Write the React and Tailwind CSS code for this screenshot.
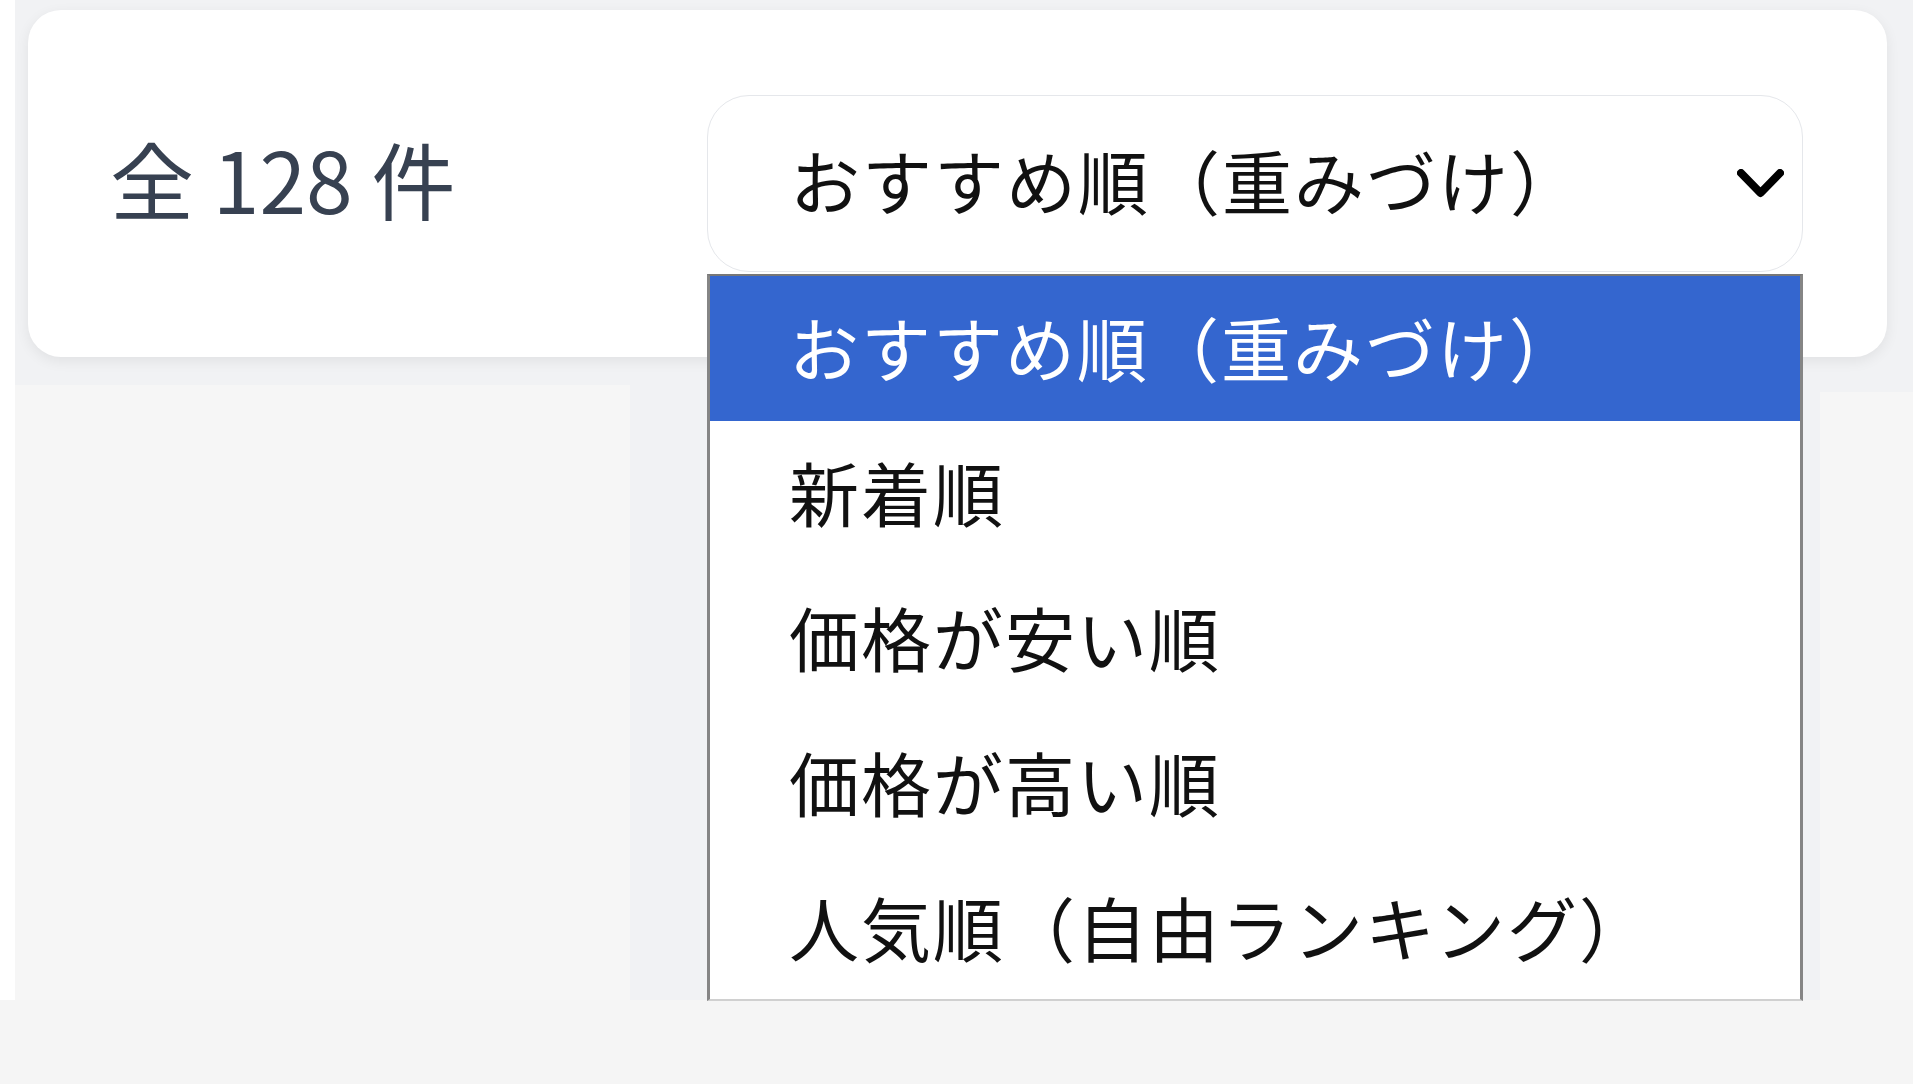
import React from 'react';

const options = [
  'おすすめ順（重みづけ）',
  '新着順',
  '価格が安い順',
  '価格が高い順',
  '人気順（自由ランキング）',
];

function Chevron() {
  return (
    <svg width="47" height="29" viewBox="0 0 47 29" fill="none" className="shrink-0">
      <polyline points="4,4 23.5,24 43,4" stroke="#000" strokeWidth="8" strokeLinecap="round" strokeLinejoin="round" />
    </svg>
  );
}

export default function App() {
  const selected = 0;

  return (
    <div className="w-[1913px] h-[1084px] bg-[#f5f5f5] flex flex-col overflow-hidden font-['Noto_Sans_CJK_JP',sans-serif]">
      <div className="h-[1000px] flex shrink-0">
        <div className="w-[15px] bg-white shrink-0" />
        <div className="flex-1 bg-[#f1f2f4] flex flex-col">
          {/* toolbar card */}
          <div className="mt-[10px] ml-[13px] mr-[26px] h-[347px] bg-white rounded-[33px] shadow-[0_4px_14px_rgba(0,0,0,0.07)] flex items-center justify-between pl-[82px] pr-[84px] relative z-10">
            <div className="text-[84px] leading-none text-[#374151] whitespace-nowrap mb-[12px]">
              全 128 件
            </div>
            <div className="relative w-[1096px]">
              <div className="h-[177px] border border-[#e5e7eb] rounded-[42px] bg-white flex items-center justify-between pl-[82px] pr-[18px]">
                <span className="text-[70px] leading-none tracking-[2px] text-[#111] mb-[8px]">{options[selected]}</span>
                <Chevron />
              </div>
              {/* open dropdown list */}
              <div className="absolute left-0 top-[179px] w-[1096px] h-[727px] bg-white border-x-[3px] border-t-[2px] border-b-[2px] border-x-[#858585] border-t-[#777] border-b-[#d0d0d0] flex flex-col">
                {options.map((o, i) => (
                  <div
                    key={o}
                    className={
                      i === selected
                        ? 'h-[145px] shrink-0 flex items-center pl-[79px] pb-[4px] text-[70px] leading-none tracking-[2px] bg-[#3466cf] text-white'
                        : 'h-[145px] shrink-0 flex items-center pl-[79px] pb-[4px] text-[70px] leading-none tracking-[2px] text-[#111]'
                    }
                  >
                    {o}
                  </div>
                ))}
              </div>
            </div>
          </div>
          {/* area below card */}
          <div className="flex-1 flex justify-between mt-[28px]">
            <div className="w-[615px] bg-[#f6f6f6]" />
            <div className="w-[93px] mt-[7px] bg-[#f6f6f6]" />
          </div>
        </div>
      </div>
    </div>
  );
}
